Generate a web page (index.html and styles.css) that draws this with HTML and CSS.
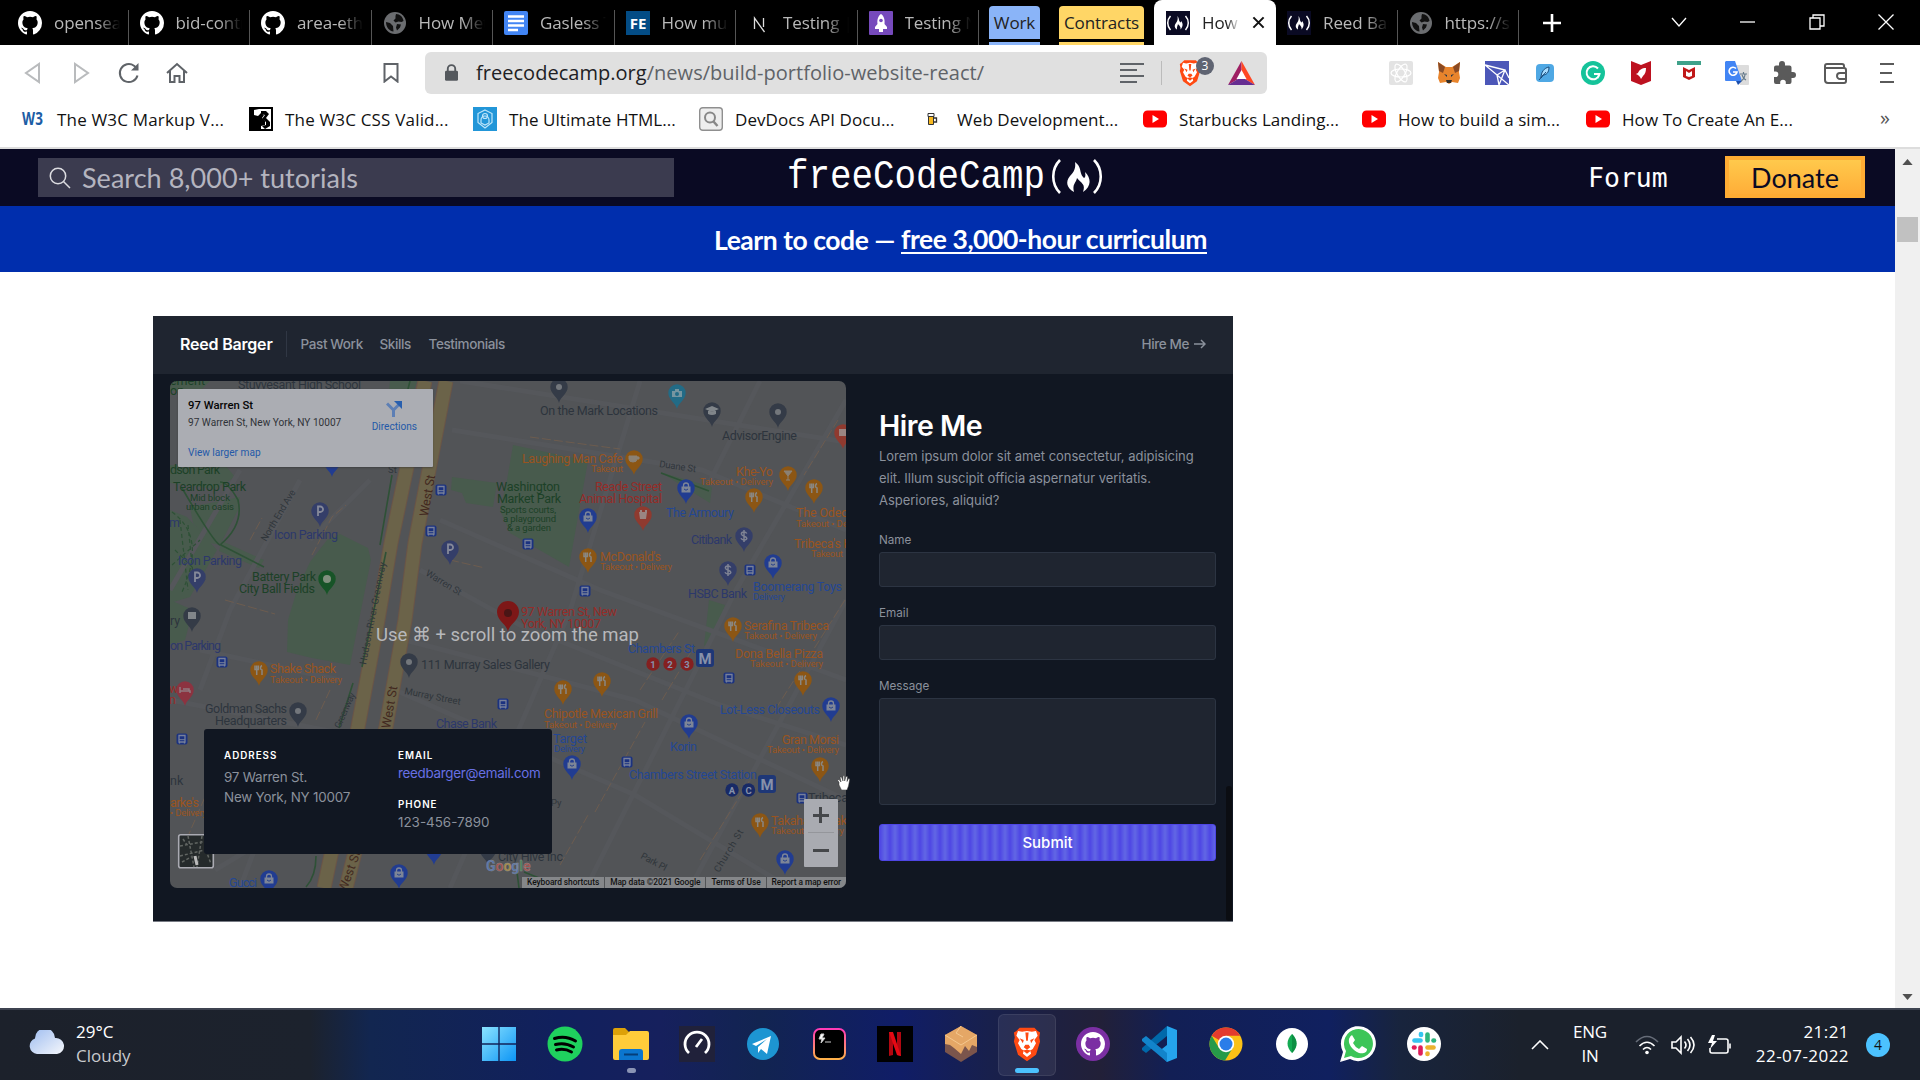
FILE: index.html
```html
<!DOCTYPE html>
<html lang="en">
<head>
<meta charset="utf-8">
<title>How to Build a Portfolio Website with React</title>
<link rel="stylesheet" href="styles.css">
</head>
<body>
<svg class="defs" aria-hidden="true">
  <symbol id="i-github" viewBox="0 0 16 16"><path fill="currentColor" d="M8 0C3.58 0 0 3.58 0 8c0 3.54 2.29 6.53 5.47 7.59.4.07.55-.17.55-.38 0-.19-.01-.82-.01-1.49-2.01.37-2.53-.49-2.69-.94-.09-.23-.48-.94-.82-1.13-.28-.15-.68-.52-.01-.53.63-.01 1.08.58 1.23.82.72 1.21 1.87.87 2.33.66.07-.52.28-.87.51-1.07-1.78-.2-3.64-.89-3.64-3.95 0-.87.31-1.59.82-2.15-.08-.2-.36-1.02.08-2.12 0 0 .67-.21 2.2.82a7.6 7.6 0 0 1 4 0c1.53-1.04 2.2-.82 2.2-.82.44 1.1.16 1.92.08 2.12.51.56.82 1.27.82 2.15 0 3.07-1.87 3.75-3.65 3.95.29.25.54.73.54 1.48 0 1.07-.01 1.93-.01 2.2 0 .21.15.46.55.38A8.01 8.01 0 0 0 16 8c0-4.42-3.58-8-8-8z"/></symbol>
  <symbol id="i-globe" viewBox="0 0 24 24"><circle cx="12" cy="12" r="11" fill="#6b6d70"/><path fill="#111" d="M13 3c4 0 7 3 7.500 7l-2 1-3-.5-3 1-2-2 2-2V5zM3 11l4 1 3 3 .5 5.500C6 20 3 16 3 11zM14 13l4 .5-1 3-3 3-1-3z"/></symbol>
  <symbol id="i-fcc" viewBox="0 0 24 24"><rect width="24" height="24" fill="#0a0a23"/><path d="M4.500 5C.8 9 .8 15 4.500 19M19.500 5c3.700 4 3.700 10 0 14" fill="none" stroke="#fff" stroke-width="1.500"/><path fill="#fff" d="M11.500 5c2 3 1 4 2.500 6 1 1.500 1-1 1-1 2 2 2.500 5-.5 8.500.5-3-1-3.500-2.500-5.500-.5 2.500-1.500 3-1 5.500-2.500-1.500-3-4-1-6.500 1.500-2 2-3.500 1.500-7z"/></symbol>
  <symbol id="i-yt" viewBox="0 0 24 24"><rect y="3.500" width="24" height="17" rx="4.500" fill="#f00"/><path d="M9.500 8v8l6.500-4z" fill="#fff"/></symbol>
  <symbol id="i-brave" viewBox="0 0 36 44"><path d="M9 2h18l4 4 3 2-1 6 1 5-5 16-11 8L7 35 2 19l1-5-1-6 3-2z" fill="#ff4a12"/><path d="M18 6l6 1 5-1 2 6-4 5 2 4-4 7-3 2 1 4-5 4-5-4 1-4-3-2-4-7 2-4-4-5 2-6 5 1z" fill="#fff"/><path d="M9 15l5 2-1 4zM27 15l-5 2 1 4zM16 23h4l2 3-4 3-4-3zM13 30l5-1 5 1-5 4zM16 8h4l-1 10h-2z" fill="#ff4a12"/></symbol>
  <symbol id="p" viewBox="-12 -12 24 32" overflow="visible"><path d="M0 16C-1 10-8.700 7-8.700 0A8.700 8.700 0 1 1 8.700 0C8.700 7 1 10 0 16z" fill="currentColor"/></symbol>
  <g id="fork"><path d="M0 16C-1 10-8.700 7-8.700 0A8.700 8.700 0 1 1 8.700 0C8.700 7 1 10 0 16z"/><path d="M-4-4.500v4h3.400v-4M-2.300-4.500v9.500M3-4.500c-2 1-2 4 0 4.500v5" fill="none" stroke="#898782" stroke-width="1.500"/></g>
  <g id="bag"><path d="M0 16C-1 10-8.700 7-8.700 0A8.700 8.700 0 1 1 8.700 0C8.700 7 1 10 0 16z"/><path d="M-4.500-1.500h9v6h-9z" fill="#7d8597"/><path d="M-2.500-1v-1.500a2.500 2.500 0 0 1 5 0V-1" fill="none" stroke="#7d8597" stroke-width="1.300"/><path d="M-2 1q2 2.500 4 0" fill="none" stroke="#25408a"/></g>
  <g id="dot"><path d="M0 16C-1 10-8.700 7-8.700 0A8.700 8.700 0 1 1 8.700 0C8.700 7 1 10 0 16z"/><circle r="3" fill="#73777c"/></g>
  <g id="park"><path d="M0 16C-1 10-8.700 7-8.700 0A8.700 8.700 0 1 1 8.700 0C8.700 7 1 10 0 16z"/><path d="M-2 5v-9.500h2.300a2.700 2.700 0 0 1 0 5.500H-2" fill="none" stroke="#858999" stroke-width="1.800"/></g>
  <g id="cash"><path d="M0 16C-1 10-8.700 7-8.700 0A8.700 8.700 0 1 1 8.700 0C8.700 7 1 10 0 16z"/><path d="M2.800-2.500C1.500-4.800-3-4.500-2.600-1.800-2 .8 2.800-.3 2.800 2.300 2.700 4.800-2 4.500-3 2.300M0-6V6" fill="none" stroke="#7f8393" stroke-width="1.500"/></g>
  <g id="bus"><rect x="-5.500" y="-5.500" width="11" height="11" rx="2" fill="#1b3280"/><path d="M-3-3.500h6v6.500h-6zM-2.500 3v1.500M2.500 3v1.500" fill="none" stroke="#77809a" stroke-width="1.300"/><path d="M-3 .7h6" stroke="#77809a"/></g>
</svg>

<header class="tabs">
  <div class="tab"><svg class="fav"><use href="#i-github"/></svg><span>opensea</span></div>
  <div class="tab"><svg class="fav"><use href="#i-github"/></svg><span>bid-contra</span></div>
  <div class="tab"><svg class="fav"><use href="#i-github"/></svg><span>area-ether</span></div>
  <div class="tab"><svg class="fav"><use href="#i-globe"/></svg><span>How Meta</span></div>
  <div class="tab"><svg class="fav" viewBox="0 0 24 24"><rect width="24" height="24" rx="2" fill="#4285f4"/><path d="M4 5.500h16M4 10h16M4 14.500h16M4 19h10" stroke="#fff" stroke-width="2.300"/></svg><span>Gasless Tr</span></div>
  <div class="tab"><svg class="fav" viewBox="0 0 24 24"><rect width="24" height="24" fill="#034c85"/><text x="12" y="17.500" text-anchor="middle" class="fe">FE</text></svg><span>How much</span></div>
  <div class="tab"><svg class="fav" viewBox="0 0 24 24"><path d="M7.500 18V7l10 14M16.500 7v9" fill="none" stroke="#ddd" stroke-width="1.300"/></svg><span>Testing | N</span></div>
  <div class="tab"><svg class="fav" viewBox="0 0 24 24"><rect width="24" height="24" rx="1" fill="#764abc"/><path d="M12 3c3 2 4 6 3.500 10l2.500 3v2h-4v3h-4v-3H6v-2l2.500-3C8 9 9 5 12 3z" fill="#fff"/><circle cx="12" cy="9.500" r="1.800" fill="#764abc"/></svg><span>Testing N</span></div>
  <div class="chip work">Work</div>
  <div class="chip contracts">Contracts</div>
  <div class="tab active"><svg class="fav"><use href="#i-fcc"/></svg><span>How to</span><svg class="x" viewBox="0 0 14 14"><path d="M1.500 1.500l11 11M12.500 1.500l-11 11" stroke="#111" stroke-width="2.200"/></svg></div>
  <div class="tab"><svg class="fav"><use href="#i-fcc"/></svg><span>Reed Barg</span></div>
  <div class="tab"><svg class="fav"><use href="#i-globe"/></svg><span>https://sc</span></div>
  <svg class="plus" viewBox="0 0 18 18"><path d="M9 0v18M0 9h18" stroke="#fff" stroke-width="2.600"/></svg>
  <div class="winctl">
    <svg viewBox="0 0 16 16"><path d="M1 4l7 8 7-8" /></svg>
    <svg viewBox="0 0 16 16"><path d="M0 8h15"/></svg>
    <svg viewBox="0 0 16 16"><path d="M1 4h10v11H1zM4 4V1h11v11h-4"/></svg>
    <svg viewBox="0 0 16 16"><path d="M.5.5l15 15M15.500.5l-15 15"/></svg>
  </div>
</header>

<nav class="toolbar">
  <div class="navbtns">
    <svg viewBox="0 0 24 24" class="dim"><path d="M18 3v18L5 12z"/></svg>
    <svg viewBox="0 0 24 24" class="dim"><path d="M6 3v18l13-9z"/></svg>
    <svg viewBox="0 0 24 24"><path d="M20.500 14.500A9 9 0 1 1 17 4.700l3 2.500" /><path d="M21.500 2v7.500H14z" fill="#5f6368" stroke="none"/></svg>
    <svg viewBox="0 0 24 24"><path d="M2 12L12 3l10 9M5 10v11h4.500v-6h5v6H19V10"/></svg>
  </div>
  <svg class="mark" viewBox="0 0 16 20"><path d="M1.500 1h13v17.500L8 13.500l-6.500 5z"/></svg>
  <div class="address">
    <svg class="lock" viewBox="0 0 14 18"><rect y="7" width="14" height="11" rx="1.500" fill="#54585d"/><path d="M3 8V5a4 4 0 0 1 8 0v3" fill="none" stroke="#54585d" stroke-width="2"/></svg>
    <span class="url"><b>freecodecamp.org</b>/news/build-portfolio-website-react/</span>
    <svg class="reader" viewBox="0 0 24 20"><path d="M0 1h24M0 7h17M0 13h24M0 19h17" stroke="#5f6368" stroke-width="2"/></svg>
    <i class="split"></i>
    <span class="shield"><svg viewBox="0 0 36 44"><use href="#i-brave"/></svg><em>3</em></span>
    <svg class="bat" viewBox="0 0 27 24"><path d="M13.500 0L0 24l13.500-8z" fill="#9e1f63"/><path d="M13.500 0L27 24l-13.500-8z" fill="#ff4724"/><path d="M0 24h27l-13.500-8z" fill="#662d91"/><path d="M13.500 9l5 9h-10z" fill="#fff"/></svg>
  </div>
  <div class="exts">
    <svg viewBox="0 0 24 24"><rect width="24" height="24" rx="2" fill="#e3e3e3"/><g fill="none" stroke="#fff" stroke-width="1.200"><ellipse cx="12" cy="12" rx="10" ry="4"/><ellipse cx="12" cy="12" rx="10" ry="4" transform="rotate(60 12 12)"/><ellipse cx="12" cy="12" rx="10" ry="4" transform="rotate(120 12 12)"/></g></svg>
    <svg viewBox="0 0 24 24"><path d="M1 1l8 5h6l8-5-1 10 1 6-2 5-6-1-3 2-3-2-6 1-2-5 1-6z" fill="#e8842c"/><path d="M1 1l7 5-2 6-4-2zM23 1l-7 5 2 6 4-2z" fill="#8a4a24"/><path d="M7 13l3 1v2zM17 13l-3 1v2z" fill="#233447"/><path d="M9 19h6l-1 3h-4z" fill="#34302c"/></svg>
    <svg viewBox="0 0 24 24"><rect width="24" height="24" fill="#4c57b8"/><path d="M0 4l20 5-6 15M0 4l12 10 8-5M12 14l2 10M12 14l12 10M20 9l4 8" fill="none" stroke="#fff" stroke-width="1.300"/></svg>
    <svg viewBox="0 0 24 24"><rect x="3" y="3" width="18" height="18" rx="4" fill="#4fa8e4"/><path d="M8 17C8 11 11 7 16 6c0 6-3 8-6 8z" fill="#a6dcff" stroke="#174b7c"/><path d="M6 19l7-8" stroke="#174b7c"/></svg>
    <svg viewBox="0 0 24 24"><circle cx="12" cy="12" r="12" fill="#15c39a"/><path d="M17 7.500A6.500 6.500 0 1 0 18.500 13H13M18.500 13l-2 4" fill="none" stroke="#fff" stroke-width="2"/></svg>
    <svg viewBox="0 0 24 24"><path d="M2 0l10 4 10-4v20l-10 4-10-4z" fill="#bd1220"/><path d="M17 7c-4 0-7 2-8 5l-2 1 2 1 2 2 1 2 2-3c2-2 3-4 3-8z" fill="#fff"/></svg>
    <svg viewBox="0 0 24 24"><path d="M0 0h24v4H0z" fill="#3fa18a"/><path d="M6 6l6 3 6-3v10l-6 3-6-3z" fill="#c01818"/><path d="M9 10l3 2 3-2v5l-3 1-3-1z" fill="#fff"/></svg>
    <svg viewBox="0 0 24 24"><path d="M9 4h14a1 1 0 0 1 1 1v18a1 1 0 0 1-1 1h-8z" fill="#dcdcdc"/><path d="M1 0h9l7 20H1a1 1 0 0 1-1-1V1z" fill="#4285f4"/><path d="M11 20h6l-4 4z" fill="#1b4fae"/><path d="M11 7.500A4 4 0 1 0 12 11H8" fill="none" stroke="#fff" stroke-width="1.600"/><path d="M15 13h7M18.500 11v2M16 20c3-2 4-4 4-7M17 14c1 3 2 4 4 5" fill="none" stroke="#657a8a" stroke-width="1.200"/></svg>
    <svg viewBox="0 0 24 24" fill="#5a5a5a"><path d="M20 11h-1.500V6.500a2 2 0 0 0-2-2H12V3a3 3 0 0 0-6 0v1.500H3a2 2 0 0 0-2 2v4h1.500a2.800 2.800 0 0 1 0 5.600H1V21a2 2 0 0 0 2 2h4.200v-1.500a2.800 2.800 0 0 1 5.600 0V23h3.700a2 2 0 0 0 2-2v-4H20a3 3 0 0 0 0-6z"/></svg>
    <svg class="wallet" viewBox="0 0 24 24" fill="none" stroke="#5a5a5a" stroke-width="2"><path d="M20 8V5a2 2 0 0 0-2-2H3a2 2 0 0 0-2 2v14a3 3 0 0 0 3 3h16a2 2 0 0 0 2-2V9a2 2 0 0 0-2-2H2"/><path d="M23 12h-7a2.700 2.700 0 0 0 0 6h7"/></svg>
    <svg class="menu" viewBox="0 0 24 24"><path d="M5 3h14M5 12h12M5 21h14" stroke="#5a5a5a" stroke-width="2"/></svg>
  </div>
</nav>

<nav class="bookmarks">
  <a class="w1"><svg viewBox="0 0 24 24"><text x="1" y="18" class="w3" textLength="21" lengthAdjust="spacingAndGlyphs">W3</text></svg>The W3C Markup V...</a>
  <a class="w2"><svg viewBox="0 0 24 24"><rect width="24" height="24"/><path d="M10 2h12v20H12v-3l4-1v-4l-3-3 2-3-3-2-3 3-4-1V3z" fill="#fff"/><path d="M12 4h5l3 3-3 4 4 4v4l-5 3-3-3 4-1v-3l-4-3 3-4-4-1z"/></svg>The W3C CSS Valid...</a>
  <a class="w3b"><svg viewBox="0 0 24 24"><rect width="24" height="24" fill="#2296d8"/><g fill="none" stroke="#bfe6fa" stroke-width="1.200"><path d="M12 3l7 3.500v9L12 21l-7-5.500v-9z"/><path d="M8 16v-3a4 4 0 0 1 8 0v3l-4 2z"/><circle cx="12" cy="9" r="2.500"/></g></svg>The Ultimate HTML...</a>
  <a class="w4"><svg viewBox="0 0 24 24"><rect x=".7" y=".7" width="22.600" height="22.600" rx="3" fill="#eee" stroke="#8f8f8f" stroke-width="1.400"/><circle cx="11" cy="10.500" r="5" fill="none" stroke="#888" stroke-width="2"/><path d="M14.500 14.500l4 4.500" stroke="#888" stroke-width="2.500"/></svg>DevDocs API Docu...</a>
  <a class="w5"><svg viewBox="0 0 24 24"><path d="M7.500 9h5v8.500h-5z" fill="#f8b920" stroke="#333"/><path d="M7 6.500h6v3H7z" fill="#fff" stroke="#333"/><path d="M13 11h2.500v4H13" fill="none" stroke="#333" stroke-width="1.300"/></svg>Web Development...</a>
  <a class="w6"><svg><use href="#i-yt"/></svg>Starbucks Landing...</a>
  <a class="w7"><svg><use href="#i-yt"/></svg>How to build a sim...</a>
  <a class="w8"><svg><use href="#i-yt"/></svg>How To Create An E...</a>
  <span class="more">»</span>
</nav>

<div class="viewport">
  <main>
    <header class="site">
      <div class="search"><svg viewBox="0 0 22 22"><circle cx="9" cy="9" r="7.700"/><path d="M14.500 14.500L21 21"/></svg>Search 8,000+ tutorials</div>
      <svg class="logo" viewBox="0 0 320 48">
        <text x="0" y="34" textLength="258" lengthAdjust="spacingAndGlyphs">freeCodeCamp</text>
        <path d="M273 6c-9 9-9 24 0 33M307 6c9 9 9 24 0 33" fill="none" stroke="#fff" stroke-width="2.600"/>
        <path d="M288 8c7 5 4 10 8 15 2 2.500 3-1 2-5 6 6 7 14-2 20 3-8-2-9-6-14-1 5-5 6-3 14-7-4-9-10-4-16 4-4 6-8 5-14z" fill="#fff"/>
      </svg>
      <a class="forum">Forum</a>
      <a class="donate">Donate</a>
    </header>
    <div class="banner">Learn to code —&nbsp;<a>free 3,000-hour curriculum</a></div>

    <article class="shot">
      <div class="pnav">
        <strong>Reed Barger</strong>
        <a class="pw">Past Work</a><a class="sk">Skills</a><a class="te">Testimonials</a>
        <a class="hire">Hire Me <svg viewBox="0 0 12 10"><path d="M0 5h11M7 1l4 4-4 4"/></svg></a>
      </div>
      <div class="pbody">
        <section class="mapbox">
          <svg class="map" viewBox="170 381 676 507">
            <rect x="170" y="381" width="676" height="507" fill="#525457"/>
            <g fill="#485b4d">
              <path d="M327 540l13-6 28 14 3 12-21 105-38-7-25-6 1-32 9-30 13-28z"/>
              <path d="M452 477l45 6-4 24-27-4-4-10-11-3z"/>
              <path d="M513 445l75 16-19 106-59-34-10-23 7-30z"/>
              <path d="M660 472l52 15-2 16zM709 600l16 5-12 35-9 6z"/>
              <path d="M190 507l50-10-2 13-18 35-10-2-17-20zM170 465h55l10 12-20 12-45-6zM170 510l17 7 30 33-27 47-20 6zM222 541l42 19-5 8-40-17zM170 600l23 10-8 30-15 5zM390 381h27l-5 16-24 2zM170 381h40l-10 10h-30z"/>
            </g>
            <g class="streets">
              <path d="M240 470l-70 120M300 480l-70 130-30 80M370 480l-60 60M452 430l250 40 144 60M440 520l160 70 246 90M420 570l100 55 200 80 126 40M405 640l230 60 211 100M395 690l240 105 150 90M846 400l-110 190-150 298M640 381l-70 230-120 277M760 381l-50 100M846 600L690 888M200 650l140 30M170 700l180 35M215 870l100-60M460 381l380 60M300 730l-60 158"/>
            </g>
            <g class="specks"><path d="M312 555l20-38 14-12M330 690l-14 30M838 420l-34 55M640 690l40-60M662 700l30-50M595 812l50-90M560 865l28-50M700 860l50-80M845 600l-70 110M530 437l90 12M450 560l35 8M182 850l26-60M250 540l12-22M225 600l50 14"/></g>
            <g class="hwy">
              <path class="edge" d="M425 381l-34 162-13 77-20 107-34 161M446 381l-31 162-10 77-19 107-40 161"/>
              <path d="M425 381l-34 162-13 77-20 107-34 161M446 381l-31 162-10 77-19 107-40 161"/>
            </g>
            <g class="trails"><path d="M392 475l-12 70M386 552l-24 115M353 683l-14 45M316 856q0 20-10 31M182 488q32 55 38 57 24-20 18-45-10-18-18-18M221 545l43 22M517 872l2 16M524 872l40 16M661 473l48 18M410 381l-3 12"/><path class="dash" d="M172 512q35 25 10 80M180 520l8 70M188 525l6 60M175 550l30 30M172 565l28-25"/></g>

            <g class="t-road">
              <text transform="translate(266 542) rotate(-59)" textLength="58">North End Ave</text>
              <text transform="translate(366 665) rotate(-79)" textLength="104">Hudson-River-Greenway</text>
              <text transform="translate(340 729) rotate(-66)" textLength="38">Greenway</text>
              <text transform="translate(425 575) rotate(31)" textLength="40">Warren St</text>
              <text transform="translate(404 694) rotate(11)" textLength="57">Murray Street</text>
              <text transform="translate(659 467) rotate(8)" textLength="37">Duane St</text>
              <text transform="translate(640 858) rotate(28)" textLength="28">Park Pl</text>
              <text transform="translate(719 873) rotate(-59)" textLength="48">Church St</text>
              <text x="388" y="473">St</text><text x="551" y="806">Py</text>
            </g>
            <g class="t-west">
              <text transform="translate(428 517) rotate(-80)" textLength="42">West St</text>
              <text transform="translate(390 729) rotate(-80)" textLength="43">West St</text>
              <text transform="translate(346 893) rotate(-70)" textLength="43">West St</text>
            </g>
            <g class="t-grey">
              <text x="238" y="389" textLength="123">Stuyvesant High School</text>
              <text x="540" y="415" textLength="118">On the Mark Locations</text>
              <text x="722" y="440" textLength="75">AdvisorEngine</text>
              <text x="421" y="669" textLength="129">111 Murray Sales Gallery</text>
              <text x="205" y="713" textLength="82">Goldman Sachs</text>
              <text x="215" y="725" textLength="72">Headquarters</text>
              <text x="498" y="861" textLength="65">City Hive Inc</text>
              <text x="808" y="802" textLength="40">Tribeca</text>
              <text x="170" y="625">ry</text><text x="170" y="785">nk</text>
            </g>
            <g class="t-green">
              <text x="170" y="385" textLength="35">ement</text><text x="170" y="395">on</text>
              <text x="170" y="474" textLength="50">dson Park</text>
              <text x="173" y="491" textLength="73">Teardrop Park</text>
              <text x="252" y="581" textLength="64">Battery Park</text>
              <text x="239" y="593" textLength="76">City Ball Fields</text>
              <text x="496" y="491" textLength="64">Washington</text>
              <text x="497" y="503" textLength="64">Market Park</text>
              <g class="sm"><text x="190" y="501" textLength="40">Mid block</text><text x="186" y="510" textLength="48">urban oasis</text><text x="500" y="513" textLength="56">Sports courts,</text><text x="503" y="522" textLength="53">a playground</text><text x="507" y="531" textLength="44">&amp; a garden</text></g>
            </g>
            <g class="t-slate">
              <text x="274" y="539" textLength="64">Icon Parking</text><text x="178" y="565" textLength="64">Icon Parking</text><text x="170" y="650" textLength="51">on Parking</text><text x="169" y="527">m</text>
              <text x="691" y="544" textLength="41">Citibank</text><text x="688" y="598" textLength="59">HSBC Bank</text><text x="436" y="728" textLength="61">Chase Bank</text>
            </g>
            <g class="t-blue">
              <text x="666" y="517" textLength="68">The Armoury</text><text x="753" y="591" textLength="89">Boomerang Toys</text><text x="628" y="653" textLength="67">Chambers St</text>
              <text x="720" y="714" textLength="100">Lot-Less Closeouts</text><text x="553" y="743" textLength="34">Target</text><text x="670" y="751" textLength="27">Korin</text>
              <text x="629" y="779" textLength="128">Chambers Street Station</text><text x="229" y="887" textLength="28">Gucci</text>
              <g class="sm"><text x="753" y="600" textLength="32">Delivery</text><text x="554" y="752" textLength="31">Delivery</text></g>
            </g>
            <g class="t-orange">
              <text x="522" y="463" textLength="101">Laughing Man Cafe</text><text x="736" y="476" textLength="37">Khe-Yo</text><text x="796" y="517" textLength="59">The Odeon</text><text x="794" y="548" textLength="60">Tribeca's Ki</text>
              <text x="600" y="561" textLength="61">McDonald's</text><text x="744" y="630" textLength="85">Serafina Tribeca</text><text x="735" y="658" textLength="88">Dona Bella Pizza</text><text x="544" y="718" textLength="114">Chipotle Mexican Grill</text>
              <text x="782" y="744" textLength="57">Gran Morsi</text><text x="771" y="825" textLength="76">Takahachi Bak</text><text x="270" y="673" textLength="66">Shake Shack</text><text x="170" y="807" textLength="29">arke's</text>
              <g class="sm"><text x="591" y="472" textLength="32">Takeout</text><text x="700" y="485" textLength="73">Takeout • Delivery</text><text x="796" y="527" textLength="73">Takeout • Delivery</text><text x="811" y="557" textLength="32">Takeout</text><text x="600" y="570" textLength="72">Takeout • Delivery</text><text x="744" y="639" textLength="73">Takeout • Delivery</text><text x="750" y="667" textLength="73">Takeout • Delivery</text><text x="544" y="728" textLength="73">Takeout • Delivery</text><text x="767" y="753" textLength="72">Takeout • Delivery</text><text x="771" y="834" textLength="73">Takeout • Delivery</text><text x="270" y="683" textLength="72">Takeout • Delivery</text><text x="170" y="816" textLength="37">• Delivery</text></g>
            </g>
            <g class="t-red">
              <text x="595" y="491" textLength="67">Reade Street</text><text x="579" y="503" textLength="83">Animal Hospital</text><text x="521" y="616" textLength="96">97 Warren St, New</text><text x="521" y="628" textLength="80">York, NY 10007</text><text x="169" y="693">w</text><text x="169" y="704">n</text>
            </g>

            <g fill="#343b47"><use href="#dot" x="559" y="387"/><use href="#dot" x="778" y="412"/><use href="#dot" x="298" y="711"/><use href="#dot" x="409" y="662"/><use href="#dot" x="488" y="849"/>
              <use href="#dot" x="712" y="411"/><use href="#dot" x="192" y="616"/></g>
            <path d="M705 409l7-3 7 3-7 3zM708 411v3q4 2 8 0v-3M188 612h8v7h-8z" fill="#81868a"/>
            <g fill="#343e69"><use href="#park" x="320" y="511"/><use href="#park" x="450" y="549"/><use href="#park" x="197" y="577"/><use href="#cash" x="744" y="536"/><use href="#cash" x="728" y="570"/></g>
            <g fill="#213c91"><use href="#bag" x="686" y="488"/><use href="#bag" x="588" y="517"/><use href="#bag" x="773" y="563"/><use href="#bag" x="831" y="706"/><use href="#bag" x="689" y="723"/><use href="#bag" x="572" y="764"/><use href="#bag" x="434" y="849"/><use href="#bag" x="269" y="879"/><use href="#bag" x="399" y="873"/><use href="#bag" x="785" y="859"/><use href="#bag" x="332" y="461"/></g>
            <g fill="#8c5614"><use href="#fork" x="814" y="488"/><use href="#fork" x="754" y="497"/><use href="#fork" x="588" y="557"/><use href="#fork" x="733" y="626"/><use href="#fork" x="259" y="670"/><use href="#fork" x="563" y="689"/><use href="#fork" x="602" y="681"/><use href="#fork" x="803" y="680"/><use href="#fork" x="820" y="766"/><use href="#fork" x="760" y="822"/></g>
            <g color="#8c5614"><use href="#p" x="622" y="447" width="24" height="32"/><use href="#p" x="776" y="463" width="24" height="32"/></g>
            <path d="M629 456h8v3q0 3-4 3t-4-3zM637 457h2v2h-2M784 471h8l-4 5zM788 476v4M786 480h4" fill="#8b8174" stroke="#8b8174"/>
            <g color="#8f3a2f"><use href="#p" x="631" y="503" width="24" height="32"/><use href="#p" x="831" y="421" width="24" height="32"/></g><path d="M639 512h8l-1 7h-6zM640 510h2v3h-2zM645 510h2v3h-2zM839 429h8v7h-8z" fill="#9a8582"/>
            <use href="#p" x="665" y="381" width="24" height="32" color="#226b86"/><path d="M672 391h10v6h-10zM675 389h4v2h-4z" fill="#7595a0"/><circle cx="677" cy="394" r="2" fill="#226b86"/>
            <use href="#p" x="315" y="567" width="24" height="32" color="#175427"/><circle cx="327" cy="579" r="4" fill="#81907e"/>
            <use href="#p" x="173" y="678" width="24" height="32" color="#8c3340"/><path d="M180 687v6M180 691h10v2M183 689h6v2" stroke="#907a7f" stroke-width="1.500" fill="none"/>
            <path d="M508 632c-1-8-11-11-11-20a11 11 0 0 1 22 0c0 9-10 12-11 20z" fill="#7d1717"/><circle cx="508" cy="613" r="4" fill="#491515"/>
            <use href="#bus" x="528" y="544"/><use href="#bus" x="750" y="570"/><use href="#bus" x="585" y="591"/><use href="#bus" x="441" y="490"/><use href="#bus" x="431" y="531"/><use href="#bus" x="222" y="662"/><use href="#bus" x="182" y="739"/><use href="#bus" x="503" y="704"/><use href="#bus" x="729" y="678"/><use href="#bus" x="627" y="762"/><use href="#bus" x="802" y="798"/>
            <g class="metro"><rect x="696" y="649" width="18" height="18" rx="3" fill="#1e3777"/><rect x="758" y="775" width="18" height="18" rx="3" fill="#1e3777"/><text x="705" y="664" class="m">M</text><text x="767" y="790" class="m">M</text>
              <g fill="#842020"><circle cx="653" cy="664" r="6.700"/><circle cx="670" cy="664" r="6.700"/><circle cx="687" cy="664" r="6.700"/></g><g fill="#182a66"><circle cx="732" cy="790" r="6.700"/><circle cx="748.500" cy="790" r="6.700"/></g>
              <text x="653" y="667.500">1</text><text x="670" y="667.500">2</text><text x="687" y="667.500">3</text><text x="732" y="793.500">A</text><text x="748.500" y="793.500">C</text></g>
            <text x="376" y="641" textLength="263" class="hint">Use ⌘ + scroll to zoom the map</text>
            <text x="486" y="871" class="google"><tspan fill="#5674ad">G</tspan><tspan fill="#a7504b">o</tspan><tspan fill="#a88b43">o</tspan><tspan fill="#5674ad">g</tspan><tspan fill="#4b8457">l</tspan><tspan fill="#a7504b">e</tspan></text>
            <g><rect x="178.700" y="834.700" width="34.600" height="33" rx="2" fill="#252a2b" stroke="#aaaab2" stroke-width="1.600"/><path d="M180 846l33-6M180 856l33-8M188 836l6 31M202 836l-5 31M182 862l9-5M206 850l5 14M183 839l4 6M208 838v6" stroke="#616562" stroke-width="1.500" stroke-dasharray="3 2"/><path d="M195 856l2 9" stroke="#bbb" stroke-width="3"/></g>
          </svg>
          <div class="place">
            <div><strong>97 Warren St</strong><p>97 Warren St, New York, NY 10007</p><a>View larger map</a></div>
            <div class="dir"><svg viewBox="0 0 16 16"><path d="M7.500 16V9L1 2.500M7.500 9L13 3.500" fill="none" stroke="#5d7fb5" stroke-width="3"/><path d="M8 0h8v8z" fill="#285fae"/></svg><a>Directions</a></div>
          </div>
          <div class="contact">
            <div><h4>ADDRESS</h4><p class="addr">97 Warren St.<br>New York, NY 10007</p></div>
            <div><h4>EMAIL</h4><p class="mail">reedbarger@email.com</p><h4>PHONE</h4><p class="phone">123-456-7890</p></div>
          </div>
          <div class="zoomer"><b></b><i></i><b class="minus"></b></div>
          <div class="legal"><span>Keyboard shortcuts</span><span>Map data ©2021 Google</span><span>Terms of Use</span><span>Report a map error</span></div>
        </section>
        <svg class="hand" viewBox="0 0 13 15"><path d="M2 7L.5 5.500 2 4.500 4 7 3 2h1.500L6 6V.8h1.600V6L9 1.500h1.500L10 6.500l1.500-3 1.300.5L11.500 11 10 15H4.500L2 10z" fill="#fff" stroke="#333" stroke-width=".5"/></svg>
        <form class="form">
          <h2>Hire Me</h2>
          <p>Lorem ipsum dolor sit amet consectetur, adipisicing elit. Illum suscipit officia aspernatur veritatis. Asperiores, aliquid?</p>
          <label>Name</label><div class="input"></div>
          <label>Email</label><div class="input"></div>
          <label>Message</label><div class="input area"></div>
          <div class="submit">Submit</div>
        </form>
        <i class="pthumb"></i>
      </div>
    </article>
  </main>
  <aside class="scroll"><svg viewBox="0 0 12 7"><path d="M0 7l6-7 6 7z"/></svg><i></i><svg class="down" viewBox="0 0 12 7"><path d="M0 0l6 7 6-7z"/></svg></aside>
</div>

<footer class="taskbar">
  <div class="weather">
    <svg viewBox="0 0 36 24"><defs><linearGradient id="cl" x1="0" y1="0" x2="1" y2="1"><stop offset="0" stop-color="#9dbcf0"/><stop offset="1" stop-color="#f5f7fb"/></linearGradient></defs><path d="M8 24a8 8 0 0 1-2-15.500A10 10 0 0 1 26 8a8 8 0 0 1 2 16z" fill="url(#cl)"/></svg>
    <p>29°C<br><span>Cloudy</span></p>
  </div>
  <div class="apps">
    <div><svg viewBox="0 0 36 36"><defs><linearGradient id="wi" x1="0" y1="0" x2="1" y2="1"><stop offset="0" stop-color="#8be3ff"/><stop offset="1" stop-color="#0d95f5"/></linearGradient></defs><path d="M1 1h16.300v16.300H1zM18.700 1H35v16.300H18.700zM1 18.700h16.300V35H1zM18.700 18.700H35V35H18.700z" fill="url(#wi)"/></svg></div>
    <div><svg viewBox="0 0 36 36"><circle cx="18" cy="18" r="17.500" fill="#1fd15e"/><path d="M7.500 12.500q11-3.500 21 2.500M8.500 18.500q9.500-2.500 18 2.500M9.500 24q8-2 15 2" fill="none" stroke="#000" stroke-width="3" stroke-linecap="round"/></svg></div>
    <div class="running"><svg viewBox="0 0 36 36"><path d="M0 4a2 2 0 0 1 2-2h10l4 4v6H0z" fill="#dda108"/><path d="M0 9h13l4-4h17a2 2 0 0 1 2 2v25a2 2 0 0 1-2 2H2a2 2 0 0 1-2-2z" fill="#ffcc3a"/><path d="M6 34V26a3 3 0 0 1 3-3h18a3 3 0 0 1 3 3v8z" fill="#0b76cf"/><path d="M11 28.500h14" stroke="#053e79" stroke-width="2"/></svg></div>
    <div><svg viewBox="0 0 36 36"><path d="M0 0h36v36H0z" fill="#20213a"/><path d="M10 27a12 12 0 1 1 16 0M17 21l6-8" fill="none" stroke="#fff" stroke-width="2.800"/></svg></div>
    <div><svg viewBox="0 0 36 36"><circle cx="18" cy="18" r="16" fill="#1d95d2"/><path d="M7 18l19-8-4 18-6-5-3 4v-6l9-8-11 7z" fill="#fff"/></svg></div>
    <div><svg viewBox="0 0 36 36"><defs><linearGradient id="te" x2="0" y2="1"><stop offset="0" stop-color="#ff3bb6"/><stop offset="1" stop-color="#ffb14a"/></linearGradient></defs><rect x="3" y="3" width="31" height="30" rx="6" fill="#000" stroke="url(#te)" stroke-width="2"/><path d="M10 8l-2 5h3l-1 4 4-5h-3l2-4zM14 16h6" fill="#fff" stroke="#ccc"/></svg></div>
    <div><svg viewBox="0 0 36 36"><path d="M0 0h36v36H0z"/><path d="M12 6h4v23l-4 1zM20 6h4v24l-4-1z" fill="#b20710"/><path d="M12 6h4l8 24-4-1z" fill="#e50914"/></svg></div>
    <div><svg viewBox="0 0 36 36"><path d="M2 9L18 0l16 9v17l-16 10L2 26z" fill="#7b554c"/><path d="M2 9L18 0l16 9v12l-5-2-3 6-4-5-4 8-7-6-4-3-5-1z" fill="#e5a766"/><path d="M2 9l16 10 16-10M18 0l-5 7 7 4" fill="none" stroke="#f5c88e"/></svg></div>
    <div class="focus"><svg viewBox="0 0 36 44"><use href="#i-brave"/></svg></div>
    <div><svg viewBox="0 0 36 36" color="#fff"><circle cx="18" cy="18" r="17" fill="#7b2fa3"/><use href="#i-github" x="6" y="6" width="24" height="24"/></svg></div>
    <div><svg viewBox="0 0 36 36"><path d="M26 0l10 4v28l-10 4-9-10 9-7z" fill="#25a4ec"/><path d="M26 0v10L5 27l-4-3v-2z" fill="#0068aa"/><path d="M1 13l4-3 21 17v9L1 15z" fill="#1284cb"/></svg></div>
    <div><svg viewBox="0 0 36 36"><circle cx="18" cy="18" r="16.500" fill="#fbc116"/><path d="M18 18L3.700 9.700A16.500 16.500 0 0 1 32.300 9.800H18z" fill="#e33b2e"/><path d="M3.700 9.700A16.500 16.500 0 0 0 17 34.500l8-13-14 .5z" fill="#269a49"/><circle cx="18" cy="18" r="8.200" fill="#fff"/><circle cx="18" cy="18" r="6.500" fill="#2a7de9"/></svg></div>
    <div><svg viewBox="0 0 36 36"><circle cx="18" cy="18" r="16" fill="#fff"/><path d="M18 8c6 6 6 13 0 19-6-6-6-13 0-19z" fill="#13aa52"/><path d="M18 8c6 6 6 13 0 19z" fill="#0d8f43"/></svg></div>
    <div><svg viewBox="0 0 36 36"><path d="M0 36l3-10A17.500 17.500 0 1 1 10 33z" fill="#fff"/><path d="M4 32l2-7a14.500 14.500 0 1 1 5 5z" fill="#3cc558"/><path d="M12 9l3 5-2 3q2 4 6 6l3-3 5 3c0 4-4 5-8 4C12 24 8 18 9 13q1-3 3-4z" fill="#fff"/></svg></div>
    <div><svg viewBox="0 0 36 36"><circle cx="18" cy="18" r="17" fill="#fff"/><g fill="none" stroke-width="4.600" stroke-linecap="round"><path d="M8.500 14.500h6" stroke="#36c5f0"/><path d="M15 8v1" stroke="#36c5f0"/><path d="M21.500 8.500v6" stroke="#2eb67d"/><path d="M27.500 14.500h.5" stroke="#2eb67d"/><path d="M27.500 21.500h-6" stroke="#ecb22e"/><path d="M21.500 27.500v.5" stroke="#ecb22e"/><path d="M14.500 27.500v-6" stroke="#e01e5a"/><path d="M8 21.500h.5" stroke="#e01e5a"/></g></svg></div>
  </div>
  <div class="tray">
    <svg class="up" viewBox="0 0 18 10"><path d="M1 9l8-8 8 8"/></svg>
    <p class="lang">ENG<br>IN</p>
    <svg class="wifi" viewBox="0 0 24 20"><path d="M1 7q11-11 22 0" stroke="#666c78"/><path d="M4.500 11q7.500-7.500 15 0M8 14.500q4-4 8 0"/><circle cx="12" cy="17.500" r="1.800" fill="#fff" stroke="none"/></svg>
    <svg class="vol" viewBox="0 0 24 20"><path d="M1 7h4l5-5v16l-5-5H1zM13.500 6.500q3 3.500 0 7M16.500 4q5 6 0 12M19.500 2q7 8 0 16"/></svg>
    <svg class="power" viewBox="0 0 24 20"><path d="M10 4h9a2 2 0 0 1 2 2v10a2 2 0 0 1-2 2H5a2 2 0 0 1-2-2v-3M23 8.500v5"/><path d="M5 0L1 8h4l-2 6 7-8H6l2-6z" fill="#fff" stroke="none"/></svg>
    <p class="clock">21:21<br>22-07-2022</p>
    <span class="count">4</span>
  </div>
</footer>
</body>
</html>
```
FILE: styles.css
```css
* { box-sizing: border-box; }
body { margin: 0; width: 1920px; height: 1080px; overflow: hidden; display: flex; flex-direction: column; background: #fff; font-family: "Open Sans", "Noto Sans", sans-serif; font-size: 17px; color: #111; }
p, h2, h4 { margin: 0; }
svg { display: block; flex: none; }
.defs { width: 0; height: 0; position: absolute; }

/* browser tabs */
.tabs { height: 45px; background: #000; display: flex; align-items: stretch; padding-left: 7px; color: #b9b9b9; flex: none; }
.tab { width: 121.500px; display: flex; align-items: center; padding-left: 11px; border-right: 1px solid transparent; border-image: linear-gradient(transparent 11px, #555 11px) 1; white-space: nowrap; overflow: hidden; flex: none; }
.fav { width: 24px; height: 24px; color: #fff; }
.tab span { margin-left: 12px; width: 66px; overflow: hidden; letter-spacing: -.1px; -webkit-mask-image: linear-gradient(90deg, #000 65%, transparent 100%); mask-image: linear-gradient(90deg, #000 65%, transparent 100%); }
.fe { font: bold 15px "Open Sans", sans-serif; fill: #fff; }
.chip { height: 39px; margin-top: 6px; line-height: 33px; border-radius: 4px 4px 0 0; color: #222; text-align: center; flex: none; letter-spacing: -.1px; }
.work { width: 51px; margin-left: 10px; background: linear-gradient(#8ab4f8 33px, #000 33px 36px, #8ab4f8 36px); }
.contracts { width: 85px; margin: 6px 10px 0 19px; background: linear-gradient(#ffd666 33px, #000 33px 36px, #ffd666 36px); }
.tab.active { width: 122px; background: #fff; border-image: none; border: 0; border-radius: 8px 8px 0 0; color: #222; padding-left: 12px; }
.tab.active span { width: 38px; }
.x { width: 13px; height: 13px; margin-left: 12px; }
.plus { width: 18px; height: 18px; margin: 14px 0 0 24px; }
.winctl { margin-left: auto; display: flex; align-items: center; gap: 53px; padding-right: 26px; }
.winctl svg { width: 16px; height: 16px; fill: none; stroke: #fff; stroke-width: 1.300; margin-top: -1px; }

/* address toolbar */
.toolbar { height: 55px; display: flex; align-items: center; padding-left: 21px; flex: none; }
.navbtns { display: flex; gap: 24px; }
.navbtns svg { width: 24px; height: 24px; fill: none; stroke: #5f6368; stroke-width: 2; }
.navbtns .dim { stroke: #b9bbbd; }
.mark { width: 16px; height: 20px; margin-left: 194px; fill: none; stroke: #5f6368; stroke-width: 2; }
.address { width: 842px; height: 42px; margin-left: 26px; background: #e0e0e0; border-radius: 6px; display: flex; align-items: center; padding-left: 20px; }
.lock { width: 13px; height: 17px; }
.url { margin-left: 18px; width: 618px; font-size: 20px; letter-spacing: .03px; color: #5f6368; white-space: nowrap; }
.url b { font-weight: 400; color: #202124; }
.reader { width: 24px; height: 20px; margin-left: 26px; }
.split { width: 1px; height: 24px; background: #bbb; margin-left: 17px; }
.shield { position: relative; margin-left: 16px; }
.shield svg { width: 24px; height: 28px; }
.shield em { position: absolute; left: 18px; top: -2px; width: 18px; height: 18px; border-radius: 9px; background: #5f6472; color: #fff; font: 12px/18px "Open Sans", sans-serif; text-align: center; }
.bat { width: 27px; height: 24px; margin-left: 26px; }
.exts { margin-left: 122px; display: flex; gap: 24px; }
.exts svg { width: 24px; height: 24px; }
.exts .wallet { margin-left: 3px; }
.exts .menu { margin-left: 3px; }

.bookmarks { height: 49px; display: flex; align-items: center; padding: 0 0 9px 21px; border-bottom: 2px solid #ddd; flex: none; white-space: nowrap; }
.bookmarks a { display: flex; align-items: center; gap: 12px; flex: none; letter-spacing: .07px; }
.bookmarks svg { width: 24px; height: 24px; }
.bookmarks .w1, .bookmarks .w2 { letter-spacing: .18px; }
.w1 { width: 228px; } .w2 { width: 224px; } .w3b { width: 226px; } .w4 { width: 222px; } .w5 { width: 222px; } .w6 { width: 219px; } .w7 { width: 224px; } .w8 { width: 294px; }
.w3 { font: bold 17px "Open Sans", sans-serif; fill: #1c5da5; }
.more { font-size: 20px; color: #555; margin-top: -4px; }

/* page viewport */
.viewport { display: flex; height: 859px; flex: none; }
main { width: 1895px; }
.site { height: 57px; background: #0a0a23; display: flex; align-items: center; padding-left: 38px; font-family: Lato, sans-serif; }
.search { width: 636px; height: 39px; background: #3b3b4f; color: #b4b4bf; display: flex; align-items: center; gap: 11px; padding-left: 11px; font-size: 27px; letter-spacing: .04px; }
.search svg { width: 22px; height: 22px; fill: none; stroke: #dcdce0; stroke-width: 1.500; }
.logo { width: 320px; height: 48px; margin-left: 113px; }
.logo text { font: 40px "Liberation Mono", monospace; fill: #fff; }
.forum { width: 137px; margin-left: 481px; color: #fff; font: 26.500px "DejaVu Sans Mono", monospace; }
.donate { width: 140px; height: 42px; border: 4px solid #ffac33; background: linear-gradient(#ffc94c, #ffae38); color: #0a0a23; font-size: 27px; line-height: 35px; text-align: center; margin-top: -1px; }
.banner { height: 66px; background: #002ead; color: #fff; display: flex; align-items: center; justify-content: center; font: bold 26.500px Lato, sans-serif; letter-spacing: -.46px; padding: 2px 0 0 26px; }
.banner a { border-bottom: 2px solid #fff; line-height: 26px; }

/* portfolio demo */
.shot { width: 1080px; height: 606px; margin: 44px 0 0 153px; background: #111722; border-bottom: 1px solid #777b84; font-family: Inter, sans-serif; color: #8b919c; }
.pnav { height: 58px; background: #1f2530; display: flex; align-items: center; font-size: 13.500px; font-weight: 500; padding: 0 27px 3px 27px; white-space: nowrap; }
.pnav strong { width: 106.500px; font-size: 16px; font-weight: 600; color: #fff; border-right: 1px solid #303744; height: 26px; line-height: 26px; letter-spacing: -.2px; }
.pw { width: 79px; margin-left: 14px; } .sk { width: 49px; }
.pnav a { letter-spacing: -.38px; }
.hire { margin-left: auto; display: flex; align-items: center; gap: 5px; }
.hire svg { width: 12px; height: 10px; fill: none; stroke: currentColor; stroke-width: 1.500; }
.pbody { height: 547px; display: flex; position: relative; padding: 7px 17px 0; }
.mapbox { width: 676px; height: 507px; border-radius: 7px; overflow: hidden; position: relative; font-family: Roboto, sans-serif; }
.map { width: 676px; height: 507px; font: 12.500px Roboto, sans-serif; }
.streets { fill: none; stroke: #55575b; stroke-width: 5; }
.specks { fill: none; stroke: #77604b; stroke-width: 1; stroke-dasharray: 9 3; opacity: .7; }
.hwy { fill: none; stroke: #6b6349; stroke-width: 13; }
.hwy .edge { stroke: #6a5547; stroke-width: 15; }
.trails { fill: none; stroke: #2e5136; stroke-width: 1.600; }
.trails .dash { stroke-dasharray: 4 3; stroke-width: 1.200; }
.t-road { fill: #30363b; font-size: 9.500px; }
.t-west { fill: #42291f; font-size: 12.500px; }
.t-grey { fill: #2d343d; }
.t-green { fill: #1c4127; }
.t-slate { fill: #2c386b; }
.t-blue { fill: #244794; }
.t-orange { fill: #9a5420; }
.t-red { fill: #962c28; }
.map .sm { font-size: 9.500px; }
.metro text { fill: #8791aa; font: bold 9.500px Roboto, sans-serif; text-anchor: middle; }
.metro .m { font-size: 15px; }
.map .hint { font-size: 18.500px; fill: #b7b8bb; }
.map .google { font: bold 14px Roboto, sans-serif; stroke: #8a8c90; stroke-width: .4px; }
.place { position: absolute; left: 8px; top: 8px; width: 255px; height: 78px; background: #abadb3; border-radius: 1px; display: flex; justify-content: space-between; padding: 9px 16px 0 10px; color: #303338; font-size: 10.100px; box-shadow: 0 1px 2px #3338; white-space: nowrap; }
.place strong { display: block; font-size: 11.300px; line-height: 15px; color: #050505; font-weight: 500; }
.place p { margin: 2px 0 15px; line-height: 15px; }
.place a { color: #2459a8; font-size: 10.100px; line-height: 15px; display: block; }
.dir { display: flex; flex-direction: column; align-items: center; padding-top: 3px; gap: 2px; }
.dir svg { width: 16px; height: 16px; }
.contact { position: absolute; left: 34px; top: 348px; width: 348px; height: 125px; background: #111722; border-radius: 3px; display: flex; padding: 20px 0 0 20px; font: 13.400px Inter, sans-serif; letter-spacing: -.2px; white-space: nowrap; }
.contact > div:first-child { width: 174px; }
.contact h4 { color: #fff; font-size: 9.800px; line-height: 13px; letter-spacing: 1px; font-weight: 600; }
.addr { line-height: 20px; margin-top: 5px; }
.mail { color: #6870e4; line-height: 18px; margin: 2px 0 16px; letter-spacing: -.28px; }
.phone { line-height: 18px; margin-top: 2px; letter-spacing: 0; }
.zoomer { position: absolute; left: 633.500px; top: 418px; width: 34px; height: 68px; background: #a9abb1; border-radius: 1px; display: flex; flex-direction: column; align-items: center; gap: 9px; padding-top: 8px; }
.zoomer b { width: 16px; height: 16px; background: linear-gradient(#45474a, #45474a) 50% / 16px 3px no-repeat, linear-gradient(#45474a, #45474a) 50% / 3px 16px no-repeat; }
.zoomer .minus { background: linear-gradient(#45474a, #45474a) 50% / 16px 3px no-repeat; }
.zoomer i { width: 26px; height: 1px; background: #94969b; }
.legal { position: absolute; right: 0; bottom: 0; height: 11.500px; display: flex; gap: 1px; color: #111; font: 500 8.400px/11.500px Roboto, sans-serif; white-space: nowrap; letter-spacing: -.06px; }
.legal span { background: #85878a; padding: 0 5px; }
.hand { position: absolute; left: 684px; top: 401px; width: 13px; height: 15px; }
.form { width: 337px; margin-left: 33px; padding-top: 29px; }
.form h2 { font-size: 28.500px; line-height: 32px; font-weight: 600; color: #fff; letter-spacing: -.5px; }
.form p { font-size: 13px; line-height: 22px; margin: 3px 0 21px; width: 334px; letter-spacing: -.03px; }
.form label { display: block; font-size: 11.700px; line-height: 16px; margin-bottom: 4px; }
.input { height: 35px; background: #1f2530; border: 1px solid #2c3442; border-radius: 3px; margin-bottom: 18px; }
.form .area { height: 107px; margin-bottom: 19px; }
.submit { height: 37px; border-radius: 3px; color: #fff; font-size: 15px; font-weight: 500; line-height: 35px; text-align: center; background: repeating-linear-gradient(90deg, #4e46e4 0, #6267e4 5px, #4e46e4 10px); border: 1px solid #4e46e4; }
.pthumb { position: absolute; right: 1px; bottom: 0; width: 6px; height: 135px; border-radius: 3px; background: #0b0d12; }

.scroll { width: 25px; background: #f0f0f0; display: flex; flex-direction: column; align-items: center; padding: 10px 0 8px; }
.scroll svg { width: 11px; height: 6px; fill: #505050; }
.scroll i { width: 21px; height: 25px; background: #c1c1c1; margin: 52px 0 auto; }

/* desktop taskbar */
.taskbar { height: 72px; flex: none; border-top: 2px solid #3d4350; display: flex; align-items: center; color: #fff; background: linear-gradient(90deg, #1c212b 0, #1c222d 310px, #122650 370px, #11205d 560px, #16205d 660px, #122451 760px, #101d67 900px, #18204c 990px, #222038 1100px, #121f55 1170px, #10205f 1330px, #18243d 1400px, #1b212c 1520px); }
.taskbar p { line-height: 24px; margin-top: -2px; }
.weather { width: 466px; padding-left: 29px; display: flex; align-items: center; gap: 11px; }
.weather svg { width: 36px; height: 24px; margin-top: -6px; }
.weather span { color: #c8cacd; }
.apps { display: flex; }
.apps div { width: 66.050px; height: 70px; display: flex; align-items: center; justify-content: center; position: relative; padding-bottom: 2px; }
.apps svg { width: 36px; height: 36px; }
.running::after { content: ""; position: absolute; bottom: 7px; width: 9px; height: 5px; border-radius: 3px; background: #8a94b5; }
.apps .focus::before { content: ""; position: absolute; left: 4px; top: 4px; width: 56px; height: 60px; border-radius: 6px; border: 1px solid #ffffff14; background: #ffffff12; }
.focus::after { content: ""; position: absolute; bottom: 7px; width: 24px; height: 5px; border-radius: 3px; background: #4cc2ff; }
.apps .focus svg { position: relative; }
.tray { display: flex; align-items: center; margin-left: auto; padding-right: 30px; }
.tray svg { fill: none; stroke: #fff; stroke-width: 1.600; }
.up { width: 18px; height: 10px; margin-right: 21px; }
.lang { text-align: center; width: 40px; margin-right: 25px; letter-spacing: -.2px; }
.wifi, .vol, .power { width: 24px; height: 20px; margin-right: 12px; }
.clock { width: 106px; text-align: right; white-space: nowrap; letter-spacing: .45px; }
.count { width: 24px; height: 24px; border-radius: 12px; background: #4cc2ff; color: #111; font-size: 14px; line-height: 24px; text-align: center; margin-left: 17px; }
```
